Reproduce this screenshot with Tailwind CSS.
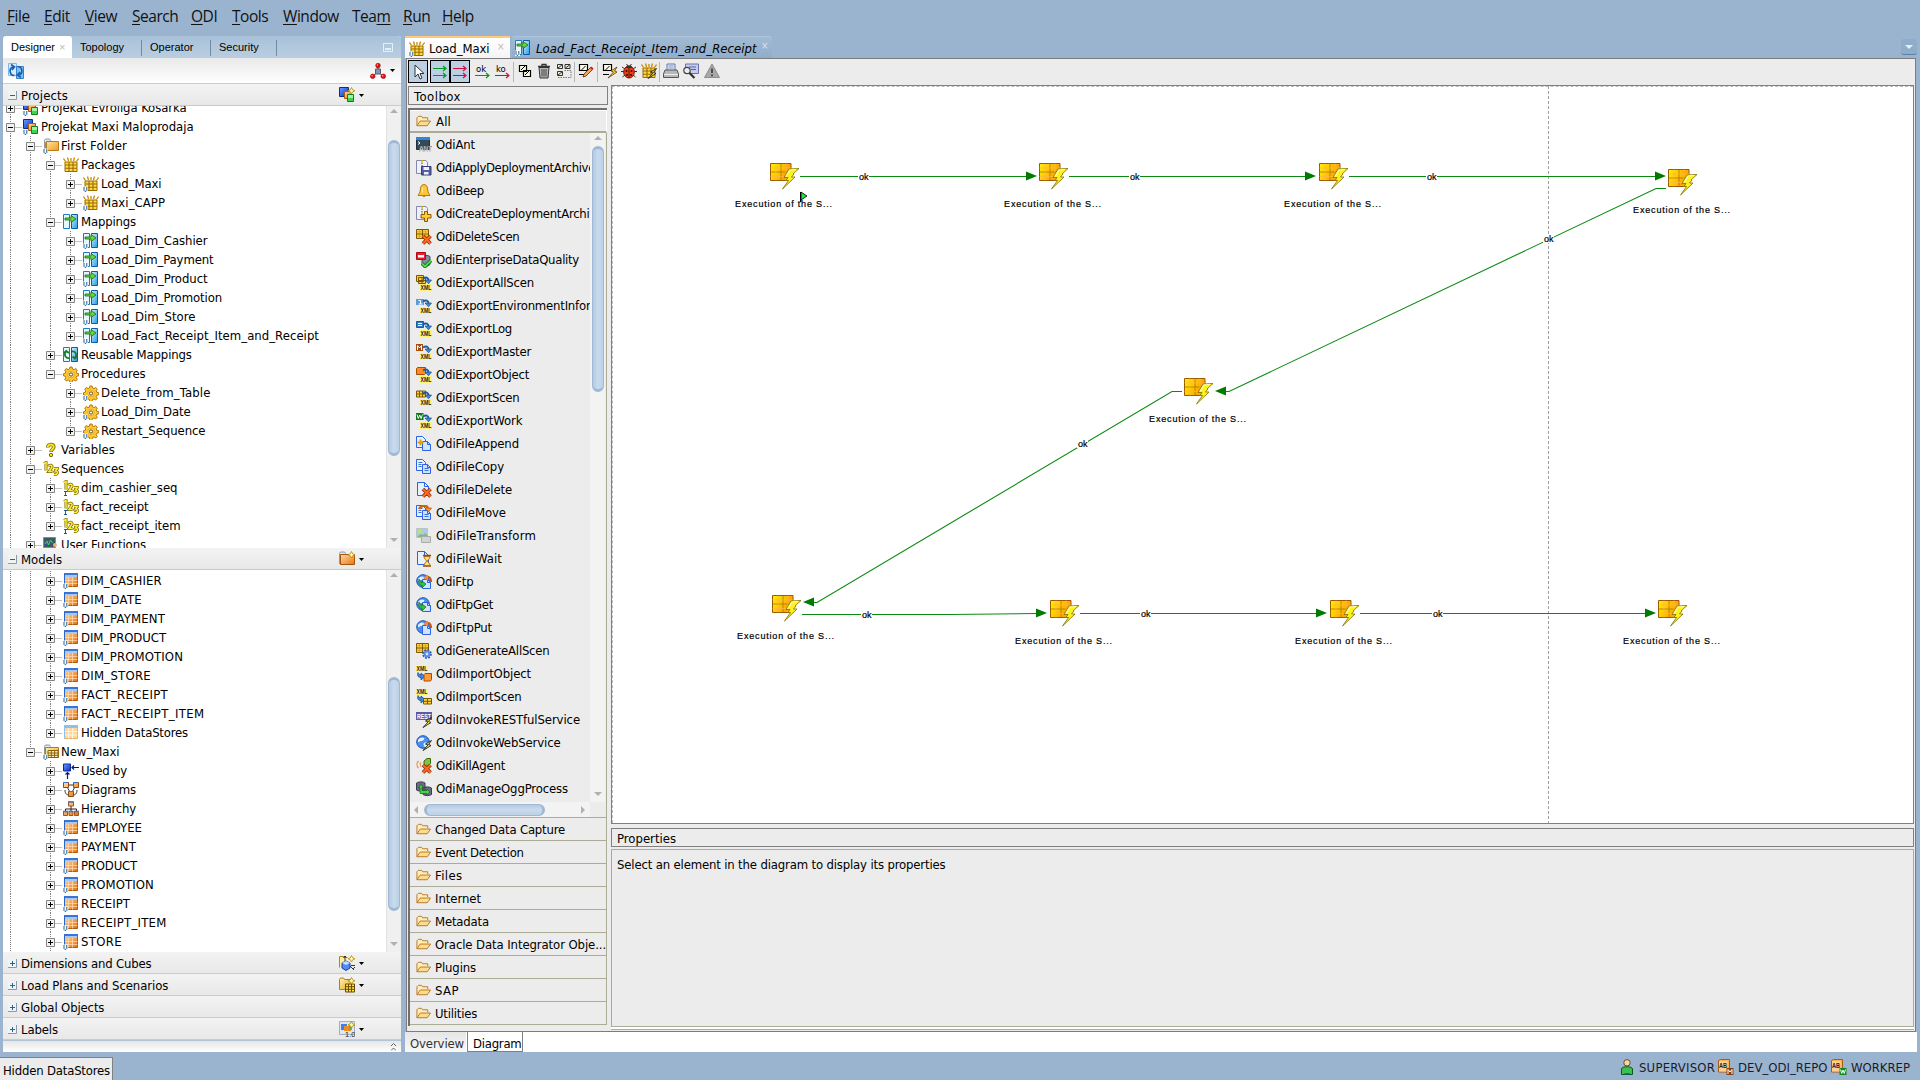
<!DOCTYPE html>
<html lang="en">
<head>
<meta charset="utf-8">
<title>Oracle Data Integrator</title>
<script src="https://cdn.jsdelivr.net/npm/@tailwindcss/browser@4"></script>
</head>
<body class="w-[1920px] h-[1080px] overflow-hidden bg-[#9ab4d0] font-['DejaVu_Sans_Condensed','DejaVu_Sans',sans-serif] text-[13px] leading-none text-black flex flex-col">

<svg class="absolute w-0 h-0">
  <defs>
    <linearGradient id="gOr" x1="0" y1="0" x2="1" y2="1"><stop offset="0" stop-color="#ffd9a8"/><stop offset="1" stop-color="#e8740c"/></linearGradient>
    <linearGradient id="gYe" x1="0" y1="0" x2="1" y2="1"><stop offset="0" stop-color="#fff2b0"/><stop offset="1" stop-color="#e5a81c"/></linearGradient>
    <linearGradient id="gFo" x1="0" y1="0" x2="1" y2="1"><stop offset="0" stop-color="#ffe6a0"/><stop offset="1" stop-color="#f09a20"/></linearGradient>
    <linearGradient id="gBl" x1="0" y1="0" x2="1" y2="1"><stop offset="0" stop-color="#d8f2ff"/><stop offset="1" stop-color="#1f9bea"/></linearGradient>
    <linearGradient id="gSt" x1="0" y1="0" x2="1" y2="0.4"><stop offset="0" stop-color="#fff200"/><stop offset="1" stop-color="#ff9a00"/></linearGradient>
    <linearGradient id="gDB" x1="0" y1="0" x2="1" y2="1"><stop offset="0" stop-color="#6aa0ff"/><stop offset="1" stop-color="#0a2cc0"/></linearGradient>
  </defs>
</svg>
<svg class="hidden">
  <symbol id="u" viewBox="0 0 16 16"><path d="M0 10.500h5v5.500H0z" fill="#fff"/><path d="M1 11v3.500l.8.8h1.200l.8-.8V11" fill="none" stroke="#1c5c94" stroke-width="1"/></symbol>
  <symbol id="i" viewBox="0 0 16 16"><path d="M1 11.500h3M2.500 11.500v4M1 15.500h3" fill="none" stroke="#1c5c94"/></symbol>
  <symbol id="project" viewBox="0 0 16 16"><path d="M.5 .5h9v9h-9z" fill="url(#gDB)" stroke="#0a2a9a"/><path d="M5.500 4.500h7v7h-7z" fill="url(#gOr)" stroke="#a65a10"/><path d="M8.500 7.500h6v7h-6z" fill="#3fd450" stroke="#147a1c"/><path d="M9 8h5v3H9z" fill="#9df2a4"/></symbol>
  <symbol id="star" viewBox="0 0 16 16"><path d="M12.500 .5l1.200 2.300 2.300 1-2.300 1-1.200 2.200-1.200-2.200-2.300-1 2.300-1z" fill="#fff6b0" stroke="#b08a10" stroke-width=".8"/></symbol>
  <symbol id="folder" viewBox="0 0 16 16"><path d="M1.500 13.500v-11l1-1.500h4l1 1.500v1h-4l-1 1v9z" fill="#dce8f2" stroke="#8899a8"/><path d="M3.500 3.500h12v9h-12z" fill="url(#gFo)" stroke="#b77a1a"/></symbol>
  <symbol id="ofolder" viewBox="0 0 16 16"><path d="M.5 13v-10.500l1-1.500h4l1 1.500" fill="#dce8f2" stroke="#8899a8"/><path d="M1.500 3.500h14v10h-14z" fill="url(#gOr)" stroke="#a8540c"/></symbol>
  <symbol id="package" viewBox="0 0 16 16"><path d="M2 5h12v9.500H2z" fill="#ffd84a" stroke="#9a6c00"/><path d="M6 5v9.500M10 5v9.500M2 8h12M2 11.300h12" stroke="#9a6c00" stroke-width="1.100"/><path d="M2.500 4.500L.5 1.500M5.500 4L4.500 .5M8 4V1M10.500 4l1-3.500M13.500 4.500l2-3" stroke="#c88a00" stroke-width="1.300"/></symbol>
  <symbol id="mapping" viewBox="0 0 16 16"><path d="M.5 .5h6v14h-6z" fill="#e4f6ff" stroke="#1a7cc4"/><path d="M8.500 .5h6v14h-6z" fill="url(#gBl)" stroke="#0b5ba8"/><path d="M2 4h6V1.500l5 3.500-5 3.500V6H2z" fill="#62d83a" stroke="#1a6a10" stroke-width=".8"/></symbol>
  <symbol id="rmapping" viewBox="0 0 16 16"><path d="M.5 .5h6v14h-6z" fill="#e4f6ff" stroke="#1a7cc4"/><path d="M8.500 .5h6v14h-6z" fill="url(#gBl)" stroke="#0b5ba8"/><path d="M6 11a3.500 3.500 0 0 1-3-6M1 6l2.200-2L6 6M9 4.500a3.500 3.500 0 0 1 3 6M14 9.500l-2.200 2L9.500 9.500" fill="none" stroke="#1a7a2a" stroke-width="1.800"/></symbol>
  <symbol id="gear" viewBox="0 0 16 16"><path d="M6.900 1h2.200l.4 2 1.500.6 1.700-1.100 1.600 1.600-1.100 1.700.6 1.500 2 .4v2.100l-2 .4-.6 1.500 1.100 1.700-1.600 1.600-1.700-1.100-1.500.6-.4 2H6.900l-.4-2-1.500-.6L3.300 15l-1.600-1.600 1.100-1.700-.6-1.500-1.700-.4V7.700l1.700-.4.6-1.500L1.700 4.100l1.600-1.600L5 3.600 6.500 3z" fill="#ffc92e" stroke="#a86a00" stroke-width=".9"/><circle cx="8" cy="8.500" r="3.300" fill="#ffe08a" stroke="#d89a10" stroke-width=".7"/><circle cx="8" cy="8.500" r="1.600" fill="#fff" stroke="#5a3a00" stroke-width=".9"/></symbol>
  <symbol id="var" viewBox="0 0 16 16"><path d="M4.800 5.500C4.800 1.500 10.800 1.500 10.800 5c0 2.200-2.800 2.400-2.800 5" fill="none" stroke="#7a6a00" stroke-width="3.600"/><path d="M4.800 5.200C4.800 1.700 10.700 1.700 10.700 5c0 2.200-2.700 2.400-2.700 4.600" fill="none" stroke="#f5e020" stroke-width="2"/><circle cx="8" cy="13" r="1.700" fill="#f5e020" stroke="#7a6a00"/></symbol>
  <symbol id="seq" viewBox="0 0 16 16"><g fill="none" stroke="#7a6800" stroke-width="3"><path d="M1 2.500L3 1.500v8"/><path d="M5.500 5.500c1-2 4-1.500 3.500.8L6 10.500h3.500"/><path d="M11 7.500h3.500l-2 2.500c3 0 2.500 4-1.500 3.500"/></g><g fill="none" stroke="#ffee3a" stroke-width="1.500"><path d="M1 2.500L3 1.500v8"/><path d="M5.500 5.500c1-2 4-1.500 3.500.8L6 10.500h3.500"/><path d="M11 7.500h3.500l-2 2.500c3 0 2.500 4-1.500 3.500"/></g></symbol>
  <symbol id="ufunc" viewBox="0 0 16 16"><path d="M.5 .5h12v10h-12z" fill="#3c566e" stroke="#6f8fb8"/><path d="M2 7l2-3 1.500 4 2-5 2 3" fill="none" stroke="#2fe04a"/><circle cx="12" cy="8" r="2" fill="#f0b080"/><path d="M8 15c0-5 8-5 8 0z" fill="#3a6ce0"/></symbol>
  <symbol id="table" viewBox="0 0 16 16"><path d="M1.500 .5h13v13h-13z" fill="url(#gOr)" stroke="#b55a08"/><path d="M1 0h14v4H1z" fill="#3a74d4"/><path d="M2 2h12v2H2z" fill="#a8c8f8"/><path d="M5.500 4v9.500M9.500 4v9.500M2 7.500h12.500M2 10.500h12.500" stroke="#ffe0bc" stroke-width=".7"/><path d="M1.500 1v13" stroke="#2a64c4"/></symbol>
  <symbol id="htable" viewBox="0 0 16 16"><path d="M1.500 .5h13v13h-13z" fill="#ffd79a" stroke="#e8b060"/><path d="M1 0h14v3H1z" fill="#8cc0f0"/><path d="M5.500 3v10.500M9.500 3v10.500M2 6.500h12.500M2 10h12.500" stroke="#fff3dc"/><path d="M1.500 0v13.500" stroke="#8cc0f0"/></symbol>
  <symbol id="model" viewBox="0 0 16 16"><path d="M1.500 12V2.500l1-1.500h4l1 1.500" fill="#dce8f2" stroke="#8899a8"/><path d="M2.500 3.500h13v10h-13z" fill="url(#gYe)" stroke="#b77a1a"/><path d="M5 6.500h10v7H5z" fill="#fff3b8" stroke="#8a5e08"/><path d="M5 9h10M5 11.300h10M8.300 6.500v7M11.600 6.500v7" stroke="#8a5e08"/></symbol>
  <symbol id="usedby" viewBox="0 0 16 16"><path d="M.5 1h7v7h-7z" fill="url(#gDB)" stroke="#0a2a9a"/><path d="M16 4.500H9M11 2.500L9 4.500l2 2M4.500 16V9.500M2.500 11.500l2-2 2 2" fill="none" stroke="#0a1a7a" stroke-width="1.200"/></symbol>
  <symbol id="diagrams" viewBox="0 0 16 16"><path d="M3 3h10L8 12zM2 8c0 4 2 5 4 5M14 8c0 4-2 5-4 5" fill="none" stroke="#333"/><g fill="url(#gOr)" stroke="#8a4a10"><path d="M.5 .5h5v5h-5zM10.500 .5h5v5h-5zM5.500 9.500h5v5h-5z"/></g><path d="M1 .5h4M11 .5h4M6 9.500h4" stroke="#3a74d4"/></symbol>
  <symbol id="hier" viewBox="0 0 16 16"><path d="M8 5v3M2.500 11V8h11v3M8 8v3" fill="none" stroke="#222"/><g fill="url(#gOr)" stroke="#a8540c"><path d="M5.500 1h5v4h-5zM.5 10.500h4v4h-4zM6 10.500h4v4H6zM11.500 10.500h4v4h-4z"/></g><path d="M5 .8h6M0 10.500h5M5.500 10.500h5M11 10.500h5" stroke="#3a74d4" stroke-width="1.300"/></symbol>
  <symbol id="refresh" viewBox="0 0 16 16"><path d="M.5 .5h8v12h-8z" fill="#d8ecff" stroke="#7ab8ec"/><path d="M8.500 3.500h7v12h-7z" fill="#7cc4fa" stroke="#3a80c8"/><path d="M6.500 12.500c-5 0-6-7-1.500-8.500M3 1.500L6.500 4 4 7M9.500 3.500c5 0 6 7 1.500 8.500M13 14.500L9.500 12 12 9" fill="none" stroke="#1a62b4" stroke-width="1.700"/></symbol>
  <symbol id="nodes" viewBox="0 0 16 16"><path d="M8 3v6L3 13M8 9l5 4" stroke="#555" fill="none"/><path d="M5.500 6h5v5h-5z" fill="#8a93ad" stroke="#545b74"/><g fill="#e81010" stroke="#9a0000" stroke-width=".6"><circle cx="8" cy="2.600" r="2.300"/><circle cx="2.700" cy="13.300" r="2.300"/><circle cx="13.300" cy="13.300" r="2.300"/></g><g fill="#ffb0b0"><circle cx="7.400" cy="2" r=".7"/><circle cx="2.100" cy="12.700" r=".7"/><circle cx="12.700" cy="12.700" r=".7"/></g></symbol>
  <symbol id="cube" viewBox="0 0 16 16"><path d="M.5 12.500V1.500h4v1h4" fill="#fff0a0" stroke="#a88a20"/><path d="M6 6V1M4.500 2.500L6 1l1.500 1.500M12 10.500h4M14 14l2-2M11 11l4 4" fill="none" stroke="#222" stroke-width=".9"/><path d="M3 8l4-2 4 2v5l-4 2.500L3 13z" fill="#4f8cf4" stroke="#1a3fa0"/><path d="M3 8l4 2 4-2-4-2z" fill="#c8deff"/></symbol>
  <symbol id="scen" viewBox="0 0 16 16"><path d="M.5 12.500v-10l1-1.500h3l1 1.500h7v10z" fill="url(#gYe)" stroke="#b77a1a"/><path d="M6.500 7h9v8h-9z" fill="#ffe23c" stroke="#6a4a00"/><path d="M9.500 7v8M12.500 7v8M6.500 9.700h9M6.500 12.300h9" stroke="#6a4a00"/></symbol>
  <symbol id="label" viewBox="0 0 16 16"><path d="M.5 .5h15v13H.5z" fill="#dfe6ec" stroke="#9fb0bf"/><path d="M2 3h6v6H2z" fill="#3a80f0"/><path d="M5 5h7v5H5z" fill="#f58a20"/><path d="M10 4h3v5h-3z" fill="#3cc44c"/><text x="6" y="15.800" font-size="7.500" font-family="Liberation Sans" fill="#222">1.0</text></symbol>

  <symbol id="open" viewBox="0 0 16 16"><path d="M1 12.500V4l1.500-1.500h3.500l1 1.500h5.500v2.500" fill="#ffeeb8" stroke="#b5752a"/><path d="M1 12.500l3.500-5h11l-3.500 5z" fill="#ffdc8c" stroke="#b5752a"/></symbol>

  <symbol id="ant" viewBox="0 0 16 16"><path d="M.5 .5h13v12H.5z" fill="#33495c" stroke="#22303e"/><path d="M0 0h14v3H0z" fill="#2f86d8"/><path d="M2 4.500l2 1.500-2 1.500" fill="none" stroke="#fff"/><text x="3" y="14" font-size="6.500" font-weight="bold" font-family="Liberation Sans" fill="#fff" stroke="#333" stroke-width=".25" textLength="13">ANT</text></symbol>
  <symbol id="zip" viewBox="0 0 16 16"><path d="M.5 .5h9.500l1.500 2v11H.5z" fill="#eef0fa" stroke="#8588b0"/><path d="M6 0v8" stroke="#c9a200" stroke-width="2" stroke-dasharray="1.500 1"/></symbol>
  <symbol id="disk" viewBox="0 0 16 16"><path d="M5.500 6.500h9.500v8.500H5.500z" fill="#5660a0" stroke="#363e78"/><path d="M7.500 7h5.500v3H7.500zM8 12h4.500v2.500H8z" fill="#eef2ff"/></symbol>
  <symbol id="bell" viewBox="0 0 16 16"><path d="M8 1.500c-3 0-3.500 3-3.700 5.500C4 10 3 10.500 2 12.500h12c-1-2-2-2.500-2.300-5.500C11.500 4.500 11 1.500 8 1.500z" fill="#ffc533" stroke="#b57c0a"/><path d="M6.500 13a1.600 1.600 0 0 0 3 0z" fill="#b57c0a"/><path d="M6.300 4.500v5" stroke="#fff3bf"/></symbol>
  <symbol id="plus" viewBox="0 0 16 16"><path d="M8.500 5.500h3v3h3.500v3.500h-3.500v3.500h-3V12H5V8.500h3.500z" fill="#ffcc33" stroke="#8a5a00"/></symbol>
  <symbol id="grid" viewBox="0 0 16 16"><path d="M.5 .5h12v9h-12z" fill="#ffcf3f" stroke="#7a5600"/><path d="M6.500 .5v9M.5 5h12" stroke="#7a5600"/><path d="M3.500 .5v9M9.500 .5v9M.5 2.800h12M.5 7.300h12" stroke="#c79a20" stroke-width=".6"/></symbol>
  <symbol id="x" viewBox="0 0 16 16"><path d="M7 7l7.500 7.500M14.500 7L7 14.500" stroke="#8a2600" stroke-width="3.600"/><path d="M7 7l7.500 7.500M14.500 7L7 14.500" stroke="#ff6a20" stroke-width="2.200"/></symbol>
  <symbol id="edq" viewBox="0 0 16 16"><path d="M6 4.500c2-1.500 6-1.500 8 0v8c-2 2-6 2-8 0z" fill="#8a8aa8" stroke="#44445c"/><path d="M.5 .5h9v7h-9z" fill="#e8202c" stroke="#b00a14"/><path d="M2 3h6v2.500H2z" fill="#fff"/><path d="M6 11.500l3 3 6-6" fill="none" stroke="#0a6a10" stroke-width="3.400"/><path d="M6 11.500l3 3 6-6" fill="none" stroke="#4be04b" stroke-width="1.800"/></symbol>
  <symbol id="xml" viewBox="0 0 16 16"><path d="M4 9h12v7H4z" fill="#fff27a"/><text x="4.600" y="15" font-size="6.500" font-weight="bold" font-family="Liberation Sans" fill="#222" textLength="10.800" lengthAdjust="spacingAndGlyphs">XML</text><path d="M7 3.500c3-2 5.500-1 5.500 2" fill="none" stroke="#1c5c9c" stroke-width="2"/><path d="M9 5h6.500l-3 3.800z" fill="#3a8cd8" stroke="#174f88" stroke-width=".7"/></symbol>
  <symbol id="bAll" viewBox="0 0 16 16"><path d="M.5 .5h7v6h-7zM2.500 2.500h7v6h-7z" fill="#ffcf3f" stroke="#7a5600"/><path d="M6 2.500v6M2.500 5.500h7" stroke="#7a5600"/></symbol>
  <symbol id="bInfo" viewBox="0 0 16 16"><path d="M0 1h8v6H0z" fill="#5a9cd8"/><path d="M2.500 2.500h2V6M2.500 6h4" stroke="#fff" fill="none"/></symbol>
  <symbol id="bLog" viewBox="0 0 16 16"><path d="M.5 .5h7v6h-7z" fill="#2f7cc8" stroke="#1a5a9c"/><path d="M2 2.500h4M2 4.500h4" stroke="#fff"/></symbol>
  <symbol id="bM" viewBox="0 0 16 16"><path d="M0 0h7v7H0z" fill="#a84a10"/><path d="M1.500 6V1.500l2 2.500 2-2.500V6" stroke="#fff" fill="none"/></symbol>
  <symbol id="bObj" viewBox="0 0 16 16"><path d="M.5 1.500l1-1h8v6l-1 1h-8z" fill="#ff8a2a" stroke="#a84a00"/></symbol>
  <symbol id="bScen" viewBox="0 0 16 16"><path d="M.5 1h9v6h-9z" fill="#ffcf3f" stroke="#7a5600"/><path d="M3.500 1v6M6.500 1v6M.5 4h9" stroke="#7a5600"/></symbol>
  <symbol id="bW" viewBox="0 0 16 16"><path d="M0 0h7.500v7H0z" fill="#0a7a1a"/><path d="M1 1.500l1.300 4L3.700 2l1.400 3.500 1.400-4" stroke="#fff" fill="none"/></symbol>
  <symbol id="doc1" viewBox="0 0 16 16"><path d="M.5 .5h6l3 3v8h-9z" fill="#e8f2ff" stroke="#2a62e8"/></symbol>
  <symbol id="doc2" viewBox="0 0 16 16"><path d="M6.500 5.500h5l3 3v6h-8z" fill="#cfe2ff" stroke="#2a62e8"/><path d="M11.500 5.500v3h3" fill="none" stroke="#2a62e8"/></symbol>
  <symbol id="lines" viewBox="0 0 16 16"><path d="M2.500 3.500h4M2.500 5.500h3M2.500 7.500h3M8.500 9.500h4M8.500 11.500h4" stroke="#3a72d8"/></symbol>
  <symbol id="sparkp" viewBox="0 0 16 16"><path d="M4.500 3.500v6M1.500 6.500h6" stroke="#e0a000" stroke-width="2"/></symbol>
  <symbol id="doc" viewBox="0 0 16 16"><path d="M1.500 .5h7l4 4v9h-11z" fill="#e8f2ff" stroke="#2a62e8"/><path d="M8.500 .5v4h4" fill="none" stroke="#2a62e8"/></symbol>
  <symbol id="movea" viewBox="0 0 16 16"><path d="M3 4c2-4 8-4 9-1" fill="none" stroke="#c86a10" stroke-width="2.400"/><path d="M9 3h6.500l-3 4z" fill="#f59a3a" stroke="#a85400" stroke-width=".7"/></symbol>
  <symbol id="trans" viewBox="0 0 16 16"><path d="M.5 .5h11v9h-11z" fill="#a8cce0" stroke="#b8c4cc"/><circle cx="4" cy="3.500" r="2" fill="#c8e070"/><path d="M1 9l4-3 3 2 3-2v3z" fill="#7ab87a"/><path d="M5.500 8.500h9v6h-9z" fill="#d0d4d0" stroke="#a8aca8"/><path d="M9 5l3 3H6z" fill="#90b090"/></symbol>
  <symbol id="hour" viewBox="0 0 16 16"><path d="M7 4.500h8M7 15h8" stroke="#9a4a10" stroke-width="1.600"/><path d="M8 5.500h6c0 3-2.500 3-2.500 4.500S14 12 14 14.500H8c0-2.500 2.500-3 2.500-4.500S8 8.500 8 5.500z" fill="#ffe27a" stroke="#b56a10"/></symbol>
  <symbol id="globe" viewBox="0 0 16 16"><circle cx="7" cy="7" r="6.300" fill="#4a90f0" stroke="#1a50b4"/><path d="M2 5c2-3 5-3 6-2s-1 3-3 3-2 2-3 1zM8 8c2-1 4 0 4 1s-2 3-3 3-2-3-1-4z" fill="#e0f0ff"/></symbol>
  <symbol id="garr" viewBox="0 0 16 16"><path d="M3 5c-1 4 0 6 3 6.500V14l4-4-4-3v2C4.500 8.500 4 7 3 5z" fill="#34c040" stroke="#0e6a18" stroke-width=".7"/></symbol>
  <symbol id="oarr" viewBox="0 0 16 16"><path d="M9 3c4-1 6 1 6 5" fill="none" stroke="#c85a10" stroke-width="2.200"/><path d="M7 4l5-3.500v6z" fill="#f58a3a"/></symbol>
  <symbol id="ggear" viewBox="0 0 16 16"><circle cx="11" cy="11" r="3.700" fill="none" stroke="#2a50b0" stroke-width="2.200" stroke-dasharray="1.700 1.200"/><circle cx="11" cy="11" r="2.400" fill="#cfe0ff" stroke="#5a88e8" stroke-width="2"/></symbol>
  <symbol id="ximp" viewBox="0 0 16 16"><path d="M0 0h12v6H0z" fill="#fff27a"/><text x=".6" y="5.300" font-size="6.500" font-weight="bold" font-family="Liberation Sans" fill="#222" textLength="10.800" lengthAdjust="spacingAndGlyphs">XML</text><path d="M2 6.500c-1 3 0 5 3 5V14l4-3.500-4-3.500v2C3.500 9 3 8 2 6.500z" fill="#3a8cd8" stroke="#174f88" stroke-width=".8"/></symbol>
  <symbol id="iobj" viewBox="0 0 16 16"><path d="M8 8.500l1-1h6.500v6l-1 1.500H8z" fill="#ff9a3a" stroke="#a84a00"/></symbol>
  <symbol id="iscen" viewBox="0 0 16 16"><path d="M7.500 9.500h8v5.500h-8z" fill="#ffcf3f" stroke="#7a5600"/><path d="M11.500 9.500v5.500M7.500 12.300h8" stroke="#7a5600"/></symbol>
  <symbol id="rest" viewBox="0 0 16 16"><path d="M0 0h16v8H0z" fill="#5a5aa8"/><text x="1" y="6.600" font-size="7" font-weight="bold" font-family="Liberation Sans" fill="#fff" textLength="14" lengthAdjust="spacingAndGlyphs">REST</text></symbol>
  <symbol id="bolt" viewBox="0 0 16 16"><path d="M15.500 5.500l-6 3.500 2.500 1-5 5.500 8-5-2.500-1z" fill="#ffe23c" stroke="#222" stroke-width=".9"/></symbol>
  <symbol id="kill" viewBox="0 0 16 16"><path d="M2.500 3c-2 2-2 5 0 7M5 4.500c-1 1-1 3 0 4" fill="none" stroke="#f08a4a" stroke-width="1.200"/><path d="M8 3l3-2.500h3.500v5L12 8H8z" fill="#7ac83a" stroke="#3a6a10"/></symbol>
  <symbol id="ogg" viewBox="0 0 16 16"><path d="M.5 2c2-1.500 7-1.500 8.500 0v7c-2 1.500-6.500 1.500-8.500 0zM7 7c2-1.500 6.500-1.500 8.500 0v6.500c-2 1.500-6.500 1.500-8.500 0z" fill="#6a6a84" stroke="#3c3c50"/><path d="M4 11V6.500H2.500L5 3.500l2.500 3H6V9.500h5V8l3 3-3 3v-1.500H4z" fill="#4bd04b" stroke="#0e6a18" stroke-width=".7"/></symbol>

  <symbol id="tcopy" viewBox="0 0 16 16"><path d="M2.500 2.500h7v6h-7zM6.500 7.500h7v6h-7z" fill="#ffffe0" stroke="#000" stroke-width="1.200"/><path d="M4 7l4-4M8 12l4-4" stroke="#000"/></symbol>
  <symbol id="trash" viewBox="0 0 16 16"><path d="M3 4.500h10l-1 10.500H4z" fill="#b8b8b8" stroke="#333"/><path d="M6 6v7.500M8 6v7.500M10 6v7.500" stroke="#444"/><path d="M2 3.500h12M6 3V1.500h4V3" fill="none" stroke="#333" stroke-width="1.300"/></symbol>
  <symbol id="tgrp" viewBox="0 0 16 16"><path d="M1.500 1.500h5v4h-5zM9 1.500h5v4H9zM1.500 8.500h5v4h-5z" fill="#f4f0c8" stroke="#333"/><path d="M2 5l4-3M9.500 5l4-3M2 12l4-3" stroke="#333"/><path d="M8.500 7.500h6.500v7h-14" fill="none" stroke="#777" stroke-dasharray="1.500 1"/></symbol>
  <symbol id="tedit" viewBox="0 0 16 16"><path d="M1.500 1.500h8v6h-8zM1 11.500h7" fill="#ffffe0" stroke="#000" stroke-width="1.200"/><path d="M3.500 7l4-4" stroke="#000"/><path d="M5 14l1-3 7-7 2 2-7 7z" fill="#f0a860" stroke="#5a2a00" stroke-width=".8"/><path d="M12 5l2 2 1.500-1.500-2-2z" fill="#e02020"/></symbol>
  <symbol id="texec" viewBox="0 0 16 16"><path d="M1.500 1.500h8v6h-8zM1 11.500h6" fill="#ffffe0" stroke="#000" stroke-width="1.200"/><path d="M3.500 7l4-4" stroke="#000"/><path d="M15 4l-6 4 2.500 1L6 15l9-6-2.500-1z" fill="#ffd23c" stroke="#5a3a00" stroke-width=".8"/></symbol>
  <symbol id="bug" viewBox="0 0 16 16"><path d="M1 4l3 2M15 4l-3 2M0 8.500h4M16 8.500h-4M1.500 14l3-2.500M14.500 14l-3-2.500M5.500 1l1.500 2M10.500 1L9 3" stroke="#333"/><ellipse cx="8" cy="9" rx="5.300" ry="6" fill="#e8401a" stroke="#7a1400"/><path d="M4.500 5c1-3.500 6-3.500 7 0z" fill="#333"/><path d="M8 5v10" stroke="#5a1000"/><g fill="#3a0a00"><circle cx="5.500" cy="8" r="1"/><circle cx="10.500" cy="8" r="1"/><circle cx="6" cy="12" r="1"/><circle cx="10" cy="12" r="1"/></g></symbol>
  <symbol id="print" viewBox="0 0 16 16"><path d="M4 7V1h8v6" fill="#dfe6fa" stroke="#6a78a8"/><path d="M5.500 3h5M5.500 5h5" stroke="#8a98c8"/><path d="M2 7h12l1.500 4v3.500H.5V11z" fill="#b8b8bc" stroke="#555"/><path d="M1 11.500h14" stroke="#eee"/></symbol>
  <symbol id="preview" viewBox="0 0 16 16"><path d="M2.500 1h13v9.500h-13z" fill="#c8ccec" stroke="#6a70b0"/><path d="M6 4h7M8 6.500h5" stroke="#5a60a0"/><circle cx="4" cy="7.500" r="3.200" fill="#e8eef4" stroke="#444" stroke-width="1.200"/><path d="M6.500 10l5 5" stroke="#333" stroke-width="2.200"/></symbol>
  <symbol id="warn" viewBox="0 0 16 16"><path d="M8 1L15.500 14.500H.5z" fill="#a8a8a8" stroke="#8c8c8c"/><path d="M8 5.500v4.500" stroke="#4c4c4c" stroke-width="2"/><circle cx="8" cy="12.300" r="1.100" fill="#4c4c4c"/></symbol>

  <symbol id="user" viewBox="0 0 16 16"><circle cx="7" cy="3.800" r="3.200" fill="#f6d8a8" stroke="#6a4a20"/><path d="M1.500 15.500V10c0-3 11-3 11 0v5.500z" fill="#3cc050" stroke="#0e5a1c"/><path d="M4.500 14h5v1.500h-5z" fill="#1a5cc8"/></symbol>
  <symbol id="repo" viewBox="0 0 16 16"><path d="M.5 1.500l2-1h9v11l-2 1.500h-9z" fill="#ffb050" stroke="#a85a10"/><path d="M1 2h8.500v10.500H1z" fill="#ffcf90"/><text x="1" y="9" font-size="6.500" font-weight="bold" font-family="Liberation Sans" fill="#223" textLength="8" lengthAdjust="spacingAndGlyphs">AB</text></symbol>
  <symbol id="rM" viewBox="0 0 16 16"><path d="M8.500 9h7v7h-7z" fill="#8a4010"/><path d="M10 15v-4.500l2 2.500 2-2.500V15" stroke="#fff" fill="none"/></symbol>
  <symbol id="rW" viewBox="0 0 16 16"><path d="M8.500 9h7v7h-7z" fill="#0a8a1a"/><path d="M9.500 10.500l1.200 4L12 11l1.300 3.500 1.200-4" stroke="#fff" fill="none"/></symbol>

  <symbol id="step" viewBox="0 0 30 27"><path d="M.5 .5h20.500v17H.5z" fill="url(#gSt)" stroke="#9a5a00"/><path d="M11 .5v17M.5 9h20.500" stroke="#a87800" stroke-width=".8"/><path d="M6 .5v17M16 .5v17M.5 5h20.500M.5 13.500h20.500" stroke="#ffb84a" stroke-width=".7"/><path d="M29 5.500l-10 .5-5 8.500h4l-2 3h2.500L12.500 26l12.500-12h-3.500l2.500-3h-1z" fill="#fff21a" stroke="#8a7a10" stroke-width=".9"/><path d="M26 6.500l-6 .5-4 6.500" fill="none" stroke="#fffcc0" stroke-width="1.200"/></symbol>
</svg>

<!-- menu -->
<nav id="menu" class="h-9 shrink-0 flex items-start pt-[4px] pl-[7px] font-['Open_Sans','Noto_Sans',sans-serif] text-[15.500px] tracking-[-0.450px] leading-6 text-[#111]"></nav>

<div class="flex h-[1016px] shrink-0">
  <!-- navigator -->
  <aside class="ml-[3px] w-[398px] flex flex-col bg-white rounded-t-[3px] overflow-hidden shrink-0">
    <div class="h-[22px] shrink-0 flex bg-gradient-to-b from-[#a9c2da] to-[#b9cde0] font-['Liberation_Sans',sans-serif] text-[11px] leading-[22px]">
      <div class="w-[69px] bg-white pl-2 flex rounded-t-[3px]"><span class="w-[48px]">Designer</span><span class="text-[#bbb]">×</span></div>
      <div class="w-[70px] pl-2 relative">Topology<i class="absolute right-0 top-1 h-4 w-px bg-[#6f8ba8]"></i></div>
      <div class="w-[69px] pl-2 relative">Operator<i class="absolute right-0 top-1 h-4 w-px bg-[#6f8ba8]"></i></div>
      <div class="w-[66px] pl-2 relative">Security<i class="absolute right-0 top-1 h-4 w-px bg-[#6f8ba8]"></i></div>
      <div class="ml-auto mr-2 mt-[7px] w-[10px] h-[9px] border border-[#e6eef6] flex items-end p-px"><i class="h-[2px] w-full bg-[#e6eef6]"></i></div>
    </div>
    <div class="h-[26px] shrink-0 flex items-center pl-[5px] pr-[6px] bg-gradient-to-b from-[#e9e9e9] to-white border-b border-[#c8ccd2]">
      <svg class="w-4 h-4"><use href="#refresh"/></svg>
      <svg class="w-4 h-4 ml-auto"><use href="#nodes"/></svg>
      <svg class="w-[5px] h-[3px] ml-1" viewBox="0 0 5 3"><path d="M0 0h5L2.500 3z"/></svg>
    </div>
    <div class="acc" data-t="Projects" data-o="1" data-i="project star"></div>
    <div class="h-[442px] shrink-0 flex overflow-hidden">
      <div id="tree1" class="flex-1 overflow-hidden -mt-2"></div>
      <div class="w-[15px] bg-[#f0f0f0] border-l border-[#e2e2e2] flex flex-col items-center">
        <svg class="w-2 h-1 mt-[3px]" viewBox="0 0 8 4"><path d="M0 4l4-4 4 4z" fill="#b0b0b0"/></svg>
        <div class="mt-[27px] h-[316px] w-3 rounded-[6px] bg-gradient-to-r from-[#b4cbe3] via-[#c9dbec] to-[#bcd0e6] border-y-[3px] border-x border-[#9fb8d4]"></div>
        <svg class="w-2 h-1 mt-auto mb-[6px]" viewBox="0 0 8 4"><path d="M0 0l4 4 4-4z" fill="#b0b0b0"/></svg>
      </div>
    </div>
    <div class="acc" data-t="Models" data-o="1" data-i="ofolder star"></div>
    <div class="h-[382px] shrink-0 flex overflow-hidden">
      <div id="tree2" class="flex-1 overflow-hidden pt-px"></div>
      <div class="w-[15px] bg-[#f0f0f0] border-l border-[#e2e2e2] flex flex-col items-center">
        <svg class="w-2 h-1 mt-[3px]" viewBox="0 0 8 4"><path d="M0 4l4-4 4 4z" fill="#b0b0b0"/></svg>
        <div class="mt-[100px] h-[234px] w-3 rounded-[6px] bg-gradient-to-r from-[#b4cbe3] via-[#c9dbec] to-[#bcd0e6] border-y-[3px] border-x border-[#9fb8d4]"></div>
        <svg class="w-2 h-1 mt-auto mb-[6px]" viewBox="0 0 8 4"><path d="M0 0l4 4 4-4z" fill="#b0b0b0"/></svg>
      </div>
    </div>
    <div class="acc" data-t="Dimensions and Cubes" data-i="cube star"></div>
    <div class="acc" data-t="Load Plans and Scenarios" data-i="scen star"></div>
    <div class="acc" data-t="Global Objects"></div>
    <div class="acc" data-t="Labels" data-i="label star"></div>
    <div class="flex-1 border-t border-[#b4c4d6] bg-gradient-to-b from-[#e6e6e6] to-white flex items-center justify-end pr-[5px]">
      <svg class="w-[5px] h-2" viewBox="0 0 5 8"><path d="M0 3l2.500-2.500L5 3M0 7.500L2.500 5 5 7.500" fill="none" stroke="#666"/></svg>
    </div>
  </aside>

  <!-- editor -->
  <main class="ml-[4px] w-[1512px] flex flex-col shrink-0">
    <div class="h-[22px] shrink-0 flex">
      <div class="w-[105px] bg-gradient-to-b from-[#fff] to-[#f4f4f4] border-t-2 border-[#ffcb7a] flex items-center pl-1 pt-px">
        <span class="relative w-4 h-4"><svg class="w-4 h-4"><use href="#package"/></svg><svg class="w-4 h-4 absolute inset-0"><use href="#u"/></svg></span>
        <span class="ml-1 w-[68px] whitespace-nowrap"><span class="tk">Load_Maxi</span></span><span class="text-[#bbb] text-[10px] -mt-1">×</span>
      </div>
      <div class="ml-[2px] w-[260px] rounded-t-[3px] bg-gradient-to-b from-[#a3bbd4] to-[#8fadcc] border-t border-[#aec4da] flex items-center pl-[3px]">
        <span class="relative w-4 h-4"><svg class="w-4 h-4"><use href="#mapping"/></svg><svg class="w-4 h-4 absolute inset-0"><use href="#u"/></svg></span>
        <span class="ml-[5px] w-[225px] italic pt-px whitespace-nowrap"><span class="tk">Load_Fact_Receipt_Item_and_Receipt</span></span><span class="text-[#d4e0ec] text-[10px] -mt-1">×</span>
      </div>
      <div class="ml-auto mt-[3px] w-4 h-4 rounded-[3px] bg-[#8faccb] border-b border-[#5a7ea8] flex items-center justify-center"><svg class="w-2 h-1" viewBox="0 0 8 4"><path d="M0 0h8L4 4z" fill="#e6f0fa"/></svg></div>
    </div>

    <div class="h-[974px] shrink-0 bg-[#ececec] border-t border-x border-b border-[#7c7c7c] ml-px mr-px flex flex-col">
      <div id="toolbar" class="h-[26px] shrink-0 flex items-start pl-px pt-px"></div>
      <div class="flex-1 flex min-h-0">
        <!-- toolbox -->
        <section class="ml-px w-[200px] flex flex-col shrink-0 pt-px">
          <div class="h-[19px] shrink-0 border border-[#808080] pl-[5px] leading-[20px]"><span class="tk">Toolbox</span></div>
          <div class="mt-[3px] w-[199px] h-[918px] border-t-2 border-l-2 border-[#707070] flex flex-col">
            <div class="h-[23px] shrink-0 border-t border-white border-b-2 border-b-[#acab95] border-r flex items-center pl-[6px]"><svg class="w-[15px] h-[15px]"><use href="#open"/></svg><span class="ml-[5px] tk">All</span></div>
            <div class="h-[684px] shrink-0 border-r border-[#acab95] flex flex-col">
              <div class="h-[669px] flex shrink-0">
                <div id="tools" class="w-[180px] overflow-hidden"></div>
                <div class="w-[15px] bg-[#f3f3f3] flex flex-col items-center">
                  <svg class="w-2 h-1 mt-[3px]" viewBox="0 0 8 4"><path d="M0 4l4-4 4 4z" fill="#b0b0b0"/></svg>
                  <div class="mt-[6px] h-[246px] w-3 rounded-[6px] bg-gradient-to-r from-[#b4cbe3] via-[#c9dbec] to-[#bcd0e6] border-y-[3px] border-x border-[#9fb8d4]"></div>
                  <svg class="w-2 h-1 mt-auto mb-[6px]" viewBox="0 0 8 4"><path d="M0 0l4 4 4-4z" fill="#b0b0b0"/></svg>
                </div>
              </div>
              <div class="h-[15px] w-[180px] flex items-center bg-[#f3f3f3]">
                <svg class="w-1 h-2 ml-1" viewBox="0 0 4 8"><path d="M4 0v8L0 4z" fill="#b0b0b0"/></svg>
                <div class="ml-[6px] w-[121px] h-3 rounded-[6px] bg-gradient-to-b from-[#b4cbe3] via-[#c9dbec] to-[#bcd0e6] border-x-[3px] border-y border-[#9fb8d4]"></div>
                <svg class="w-1 h-2 ml-auto mr-[5px]" viewBox="0 0 4 8"><path d="M0 0v8l4-4z" fill="#b0b0b0"/></svg>
              </div>
            </div>
            <div id="cats" class="border-t border-[#acab95]"></div>
          </div>
        </section>

        <!-- diagram and properties -->
        <section class="ml-[3px] w-[1303px] flex flex-col shrink-0">
          <div class="relative h-[739px] shrink-0 bg-white border border-[#808080] overflow-hidden">
            <div class="absolute inset-0 border-t border-l border-dashed border-[#bbb]"></div>
            <svg id="flow" class="absolute left-0 top-0 w-[1301px] h-[737px]" viewBox="612 86 1301 737">
              <path d="M1548.500 86v737" stroke="#a0a0a0" stroke-dasharray="3 2"/>
            </svg>
            <div id="nodes-layer"></div>
          </div>
          <div class="mt-[4px] h-[19px] shrink-0 border border-[#808080] pl-[5px] leading-[20px]"><span class="tk">Properties</span></div>
          <div class="mt-[2px] h-[178px] shrink-0 border border-[#acab95] pl-[5px] pt-[8px]"><span class="tk">Select an element in the diagram to display its properties</span></div>
          <div class="h-[3px] bg-white border-b border-[#acab95]"></div>
        </section>
      </div>
    </div>
    <div class="flex-1 bg-white flex">
      <div class="w-[61px] pl-[5px] pt-[5px] bg-gradient-to-b from-[#e6e6e6] to-[#f8f8f8] text-[#333]"><span class="tk">Overview</span></div>
      <div class="ml-px w-[56px] h-[20px] pl-[5px] pt-[5px] border-r border-b border-l border-[#808080]"><span class="tk">Diagram</span></div>
    </div>
  </main>
</div>

<footer class="h-7 shrink-0 flex">
  <div class="mt-[5px] w-[113px] bg-[#ececec] border-t border-r border-[#808080] pl-[3px] pt-[6px] whitespace-nowrap"><span class="tk">Hidden DataStores</span></div>
  <div class="ml-auto flex items-center mr-[10px] h-7 pt-[2px] text-[#1a1a2a]">
    <svg class="w-4 h-4"><use href="#user"/></svg><span class="ml-[3px] w-[79px]"><span class="tk">SUPERVISOR</span></span>
    <svg class="w-4 h-4"><use href="#repo"/><use href="#rM"/></svg><span class="ml-[4px] w-[93px]"><span class="tk">DEV_ODI_REPO</span></span>
    <svg class="w-4 h-4"><use href="#repo"/><use href="#rW"/></svg><span class="ml-[4px] w-[59px]"><span class="tk">WORKREP</span></span>
  </div>
</footer>

<script>
const $ = s => document.querySelector(s);
const icon = (names, cls = 'w-4 h-4 shrink-0') => `<svg class="${cls}">${names.split(' ').map(n => `<use href="#${n}"/>`).join('')}</svg>`;

// menu: label, underlined letter index, distance to the next item
$('#menu').innerHTML = [['File',0,37],['Edit',0,41],['View',0,47],['Search',0,59],['ODI',0,41],['Tools',0,51],['Window',0,69],['Team',3,51],['Run',0,39],['Help',0,40]]
  .map(([t,u,w]) => `<span class="whitespace-nowrap shrink-0" style="width:${w}px">${t.slice(0,u)}<u class="underline underline-offset-2">${t[u]}</u>${t.slice(u+1)}</span>`).join('');

// accordion headers
document.querySelectorAll('.acc').forEach(e => {
  e.className = 'h-[22px] shrink-0 flex items-center pl-[5px] pt-px bg-gradient-to-b from-[#f3f3f3] to-[#e8e8e8] border-b border-[#c5ccd6]';
  const open = e.dataset.o;
  e.innerHTML = `<svg class="w-[9px] h-[9px] mt-px" viewBox="0 0 9 9"><path d="M0 0h9v9H0z" fill="#eef3f6"/><path d="M8.500 0v8.500H0" fill="none" stroke="#8a9aa8"/><path d="M2 4.500h5${open ? '' : 'M4.500 2v5'}" stroke="#1f6a8c"/></svg>
  <span class="ml-1 mt-px w-[318px]"><span class="tk">${e.dataset.t}</span></span>` + (e.dataset.i ? icon(e.dataset.i) + '<svg class="w-[5px] h-[3px] ml-1" viewBox="0 0 5 3"><path d="M0 0h5L2.500 3z"/></svg>' : '');
});

// trees: level, expander, icons, label
function tree(el, rows, tail) {
  const lv = rows.map(r => r[0]).concat(tail);
  el.innerHTML = rows.map(([l, ex, ic, t], n) => {
    let p = '';
    for (let k = 0; k <= l; k++) {
      let more = false;
      for (let j = n + 1; j < lv.length; j++) { if (lv[j] === k) { more = true; break; } if (lv[j] < k) break; }
      const x = 7.5 + 20 * k;
      if (more) p += `M${x} 0V19`; else if (k === l) p += `M${x} 0V9`;
    }
    const x = 7.5 + 20 * l;
    return `<div class="h-[19px] flex items-center whitespace-nowrap">
      <svg class="h-[19px] shrink-0" style="width:${20 * l + 20}px"><path d="${p}M${x} 10.500H${x + 12}" stroke="#808080" stroke-dasharray="1 1" fill="none"/>
      <path d="M${x - 4} 6.500h8v8h-8z" fill="#f2f2ee" stroke="#848484"/><path d="M${x - 2.5} 10.500h5${ex === '+' ? `M${x} 8v5` : ''}" stroke="#000"/></svg>
      ${icon(ic)}<span class="ml-[2px] tk">${t}</span></div>`;
  }).join('');
}
tree($('#tree1'), [
  [0,'+','project u','Projekat Evroliga Kosarka'],[0,'-','project u','Projekat Maxi Maloprodaja'],[1,'-','folder u','First Folder'],
  [2,'-','package','Packages'],[3,'+','package u','Load_Maxi'],[3,'+','package u','Maxi_CAPP'],
  [2,'-','mapping','Mappings'],[3,'+','mapping u','Load_Dim_Cashier'],[3,'+','mapping u','Load_Dim_Payment'],[3,'+','mapping u','Load_Dim_Product'],[3,'+','mapping u','Load_Dim_Promotion'],[3,'+','mapping u','Load_Dim_Store'],[3,'+','mapping u','Load_Fact_Receipt_Item_and_Receipt'],
  [2,'+','rmapping','Reusable Mappings'],[2,'-','gear','Procedures'],[3,'+','gear u','Delete_from_Table'],[3,'+','gear u','Load_Dim_Date'],[3,'+','gear u','Restart_Sequence'],
  [1,'+','var','Variables'],[1,'-','seq','Sequences'],[2,'+','seq i','dim_cashier_seq'],[2,'+','seq i','fact_receipt'],[2,'+','seq i','fact_receipt_item'],[1,'+','ufunc','User Functions']
], [1,0]);
tree($('#tree2'), [
  ...['DIM_CASHIER','DIM_DATE','DIM_PAYMENT','DIM_PRODUCT','DIM_PROMOTION','DIM_STORE','FACT_RECEIPT','FACT_RECEIPT_ITEM'].map(t => [2,'+','table u',t]),
  [2,'+','htable','Hidden DataStores'],[1,'-','model u','New_Maxi'],[2,'+','usedby','Used by'],[2,'+','diagrams','Diagrams'],[2,'+','hier','Hierarchy'],
  ...['EMPLOYEE','PAYMENT','PRODUCT','PROMOTION','RECEIPT','RECEIPT_ITEM','STORE'].map(t => [2,'+','table u',t])
], [2,0]);

// toolbox
$('#tools').innerHTML = [['ant','OdiAnt'],['zip disk','OdiApplyDeploymentArchive'],['bell','OdiBeep'],['zip plus','OdiCreateDeploymentArchive'],['grid x','OdiDeleteScen'],['edq','OdiEnterpriseDataQuality'],
  ['bAll xml','OdiExportAllScen'],['bInfo xml','OdiExportEnvironmentInformation'],['bLog xml','OdiExportLog'],['bM xml','OdiExportMaster'],['bObj xml','OdiExportObject'],['bScen xml','OdiExportScen'],['bW xml','OdiExportWork'],
  ['doc1 doc2 sparkp','OdiFileAppend'],['doc1 doc2 lines','OdiFileCopy'],['doc x','OdiFileDelete'],['doc1 doc2 lines movea','OdiFileMove'],['trans','OdiFileTransform'],['doc hour','OdiFileWait'],
  ['globe doc2 garr oarr','OdiFtp'],['globe doc2 garr','OdiFtpGet'],['globe doc2 oarr','OdiFtpPut'],['grid ggear','OdiGenerateAllScen'],['ximp iobj','OdiImportObject'],['ximp iscen','OdiImportScen'],
  ['rest bolt','OdiInvokeRESTfulService'],['globe bolt','OdiInvokeWebService'],['kill x','OdiKillAgent'],['ogg','OdiManageOggProcess']]
  .map(([i,t]) => `<div class="h-[23px] flex items-center pl-[6px] whitespace-nowrap">${icon(i)}<span class="ml-1 tk">${t}</span></div>`).join('');
$('#cats').innerHTML = ['Changed Data Capture','Event Detection','Files','Internet','Metadata','Oracle Data Integrator Obje...','Plugins','SAP','Utilities']
  .map(t => `<div class="h-[23px] border-b border-r border-[#acab95] flex items-center pl-[6px] whitespace-nowrap">${icon('open','w-[15px] h-[15px] shrink-0')}<span class="ml-1 tk">${t}</span></div>`).join('');

// toolbar
const btn = 'w-5 h-[23px] shrink-0 border border-black bg-[#bcd0e4] flex items-center justify-center';
const sep = m => `<i class="w-px h-5 mt-[2px] bg-[#b8b8b8] shrink-0" style="margin-left:${m}px"></i>`;
const ti = (n, m) => `<span class="shrink-0 mt-[3px]" style="margin-left:${m}px">${icon(n)}</span>`;
const arrows = c => `<svg class="w-4 h-4" viewBox="0 0 16 16"><path d="M1 4.500h12M1 11.500h12M11 2l3 2.500L11 7M11 9l3 2.500L11 14" fill="none" stroke="${c}" stroke-width="1.200"/></svg>`;
const word = (t, c, m) => `<svg class="w-4 h-4 mt-[3px] shrink-0" style="margin-left:${m}px" viewBox="0 0 16 16"><text x="1" y="9" font-size="9.500" font-family="DejaVu Sans Condensed">${t}</text><path d="M0 12.500h13M11 10l3 2.500-3 2.500" fill="none" stroke="${c}" stroke-width="1.200"/></svg>`;
$('#toolbar').innerHTML = `<div class="${btn}"><svg class="w-4 h-4" viewBox="0 0 16 16"><path d="M5 1v12l3-3 2 5 2-1-2-4.500h4z" fill="#fff" stroke="#333"/></svg></div>
  <div class="${btn} ml-[2px]">${arrows('#009a1a')}</div><div class="${btn}">${arrows('#d80a3a')}</div>`
  + word('ok','#009a1a',5) + word('ko','#d80a3a',4) + sep(2) + ti('tcopy',3) + ti('trash',3) + ti('tgrp',4) + sep(2) + ti('tedit',3) + sep(3) + ti('texec',4) + ti('bug',3) + ti('package bolt',4) + sep(2) + ti('print',3) + ti('preview',4) + ti('warn',5);

// links: points, arrow direction at the end, arrow tip, label centre
const links = [
  ['800,176.5 1026,176.5',1,1037,176,864,176],['1069,176.500 1306,176.500',1,1316,176,1135,176],['1349,176.500 1655,176.500',1,1666,176,1432,176],
  ['1666,188.500 1656,188.500 1229,391.500 1225,391.500',-1,1215,391,1549,238],['1182,391.500 1172,391.500 817,602.500 813,602.500',-1,803,602,1083,443],
  ['802,614.500 950,614.500 1036,613.500',1,1047,613,867,614],['1080,613.500 1317,613.500',1,1327,613,1146,613],['1360,613.500 1645,613.500',1,1656,613,1438,613]];
$('#flow').innerHTML += links.map(([p,d,x,y,lx,ly]) => `<polyline points="${p}" fill="none" stroke="#0a8a10" stroke-width="1.100"/>
  <path d="M${x} ${y}l${-11*d} -4.500v9z" fill="#007a00"/><path d="M${lx-6} ${ly-4}h11v9h-11z" fill="#fff"/>
  <text x="${lx-5}" y="${ly+4}" font-size="9" font-family="Liberation Sans" stroke="#000" stroke-width=".2">ok</text>`).join('');

// steps: icon position
$('#nodes-layer').innerHTML = [[770,163],[1039,163],[1319,163],[1668,169],[1184,378],[772,595],[1050,600],[1330,600],[1658,600]]
  .map(([x,y]) => `<div class="absolute w-[98px] flex flex-col items-center" style="left:${x-612-35}px;top:${y-86}px">
  <svg class="w-[30px] h-[27px] ml-[2px]"><use href="#step"/></svg><span class="mt-[9px] font-['Liberation_Sans',sans-serif] text-[9px] leading-[10px] tracking-[0.820px] whitespace-nowrap [-webkit-text-stroke:0.200px_#000]">Execution of the S...</span></div>`).join('')
  + `<svg class="absolute left-[188px] top-[105px] w-2 h-3" viewBox="0 0 8 12"><path d="M.7 1v10" stroke="#000" stroke-width="1.400"/><path d="M1 1l6 4-6 4z" fill="#1fe04a" stroke="#000" stroke-width=".8"/></svg>`;

// label widths in pixels; letter spacing is derived from them
const widths = {'Projekat Evroliga Kosarka':144.5,'Projekat Maxi Maloprodaja':151.5,'First Folder':65,'Packages':53,'Load_Maxi':59.5,'Maxi_CAPP':63,'Mappings':54,'Load_Dim_Cashier':105.5,'Load_Dim_Payment':111.5,'Load_Dim_Product':105.5,'Load_Dim_Promotion':120,'Load_Dim_Store':93.5,'Load_Fact_Receipt_Item_and_Receipt':217,'Reusable Mappings':109.7,'Procedures':63.7,'Delete_from_Table':108.5,'Load_Dim_Date':88.5,'Restart_Sequence':103.5,'Variables':53,'Sequences':62,'dim_cashier_seq':95.5,'fact_receipt':66.5,'fact_receipt_item':98.5,'User Functions':84,
  'DIM_CASHIER':79.7,'DIM_DATE':60,'DIM_PAYMENT':83,'DIM_PRODUCT':84,'DIM_PROMOTION':101,'DIM_STORE':69,'FACT_RECEIPT':86,'FACT_RECEIPT_ITEM':122.500,'Hidden DataStores':106,'New_Maxi':57.5,'Used by':45,'Diagrams':54,'Hierarchy':54,'EMPLOYEE':60,'PAYMENT':54,'PRODUCT':55,'PROMOTION':71.7,'RECEIPT':48,'RECEIPT_ITEM':84.5,'STORE':40,
  'Projects':46,'Models':40,'Dimensions and Cubes':129.3,'Load Plans and Scenarios':146.3,'Global Objects':82.3,'Labels':36,'Toolbox':46,'All':14,
  'OdiAnt':38,'OdiApplyDeploymentArchive':158,'OdiBeep':47,'OdiCreateDeploymentArchive':166,'OdiDeleteScen':82.5,'OdiEnterpriseDataQuality':142,'OdiExportAllScen':97,'OdiExportEnvironmentInformation':193,'OdiExportLog':75,'OdiExportMaster':94,'OdiExportObject':92,'OdiExportScen':82.5,'OdiExportWork':85.5,'OdiFileAppend':82,'OdiFileCopy':67,'OdiFileDelete':75,'OdiFileMove':69,'OdiFileTransform':99,'OdiFileWait':65,'OdiFtp':36.5,'OdiFtpGet':56,'OdiFtpPut':55,'OdiGenerateAllScen':112.5,'OdiImportObject':94,'OdiImportScen':84.5,'OdiInvokeRESTfulService':143,'OdiInvokeWebService':123.5,'OdiKillAgent':68,'OdiManageOggProcess':131,
  'Changed Data Capture':129,'Event Detection':87.5,'Files':26.5,'Internet':45,'Metadata':53,'Oracle Data Integrator Obje...':170,'Plugins':40,'SAP':23,'Utilities':41,'Properties':58,'Select an element in the diagram to display its properties':327.5,'Overview':53,'Diagram':47.5,'SUPERVISOR':75,'DEV_ODI_REPO':88.5,'WORKREP':58};
const ctx = document.createElement('canvas').getContext('2d');
ctx.font = '13px "DejaVu Sans Condensed"';
document.querySelectorAll('.tk').forEach(e => {
  const t = e.textContent, w = widths[t];
  if (w) e.style.letterSpacing = ((w + 1 - ctx.measureText(t).width) / t.length).toFixed(3) + 'px';
});
</script>
</body>
</html>
